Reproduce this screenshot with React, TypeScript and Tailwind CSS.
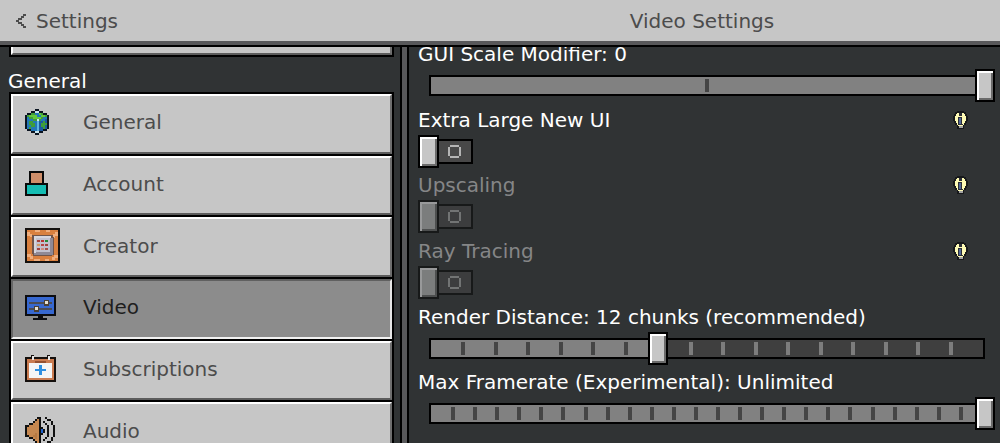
import { useState, type ReactNode } from "react";

type PixelArtProps = { rows: string[]; palette: Record<string, string>; className: string };

function PixelArt({ rows, palette, className }: PixelArtProps) {
  return (
    <svg
      aria-hidden="true"
      viewBox={`0 0 ${rows[0].length} ${rows.length}`}
      shapeRendering="crispEdges"
      className={className}
    >
      {rows.flatMap((row, y) =>
        [...row].map((c, x) =>
          palette[c] ? <rect key={`${x}-${y}`} x={x} y={y} width="1" height="1" fill={palette[c]} /> : null,
        ),
      )}
    </svg>
  );
}

const GLOBE = [
  ".....kk.....",
  "...kkwwkk...",
  ".kkggbbGgkk.",
  "kgGGGGbbGGgk",
  "kbggGGGGgbbk",
  "kbbbggwgbbBk",
  "kbggbbcBBgBk",
  "kbgggbcBgggk",
  "kbbggbcBggBk",
  "kbgbbbcBBgBk",
  ".kkbbbcBBkk.",
  "...kkwwkk...",
  ".....kk.....",
];

const SPEAKER = [
  "......kk..k.....",
  ".....kok...kk...",
  "....kook.k...k..",
  "..kkoook..k..k..",
  "kkoooook...k..k.",
  "kooooookk..k..k.",
  "kooooookbk.k..k.",
  "kooooookbk.k..k.",
  "kooooOokk..k..k.",
  "kkooOOok...k..k.",
  "..kkoOok..k..k..",
  "....kook.k...k..",
  ".....kok...kk...",
  "......kk..k.....",
];

function GlobeIcon() {
  return (
    <PixelArt
      className="h-[26px] w-6"
      rows={GLOBE}
      palette={{ k: "#0b1420", w: "#c9e6ef", g: "#3f9d3a", G: "#62c83c", b: "#2377b8", B: "#1c5a9f", c: "#5fb4e0" }}
    />
  );
}

function AccountIcon() {
  return (
    <svg aria-hidden="true" viewBox="0 0 23 25" className="h-[25px] w-[23px]">
      <path d="M4 0h15v13H4z" fill="#0a0a0a" />
      <path d="M6 2h11v10H6z" fill="#cf8e69" />
      <path d="M0 12h23v13H0z" fill="#0a0a0a" />
      <path d="M2 14h19v9H2z" fill="#15bdb3" />
    </svg>
  );
}

function CreatorIcon() {
  const dots = ["#a4423f", "#b73531", "#258a38", "#cf9c68", "#b84444", "#a4423f", "#a4423f", "#cf8d80", "#a7514a"];
  return (
    <svg aria-hidden="true" viewBox="0 0 35 35" shapeRendering="crispEdges" className="size-[35px]">
      <path d="M0 0h35v35H0z" fill="#151210" />
      <path d="M2 2h31v31H2z" fill="#d9803f" />
      <path
        d="M2 4h3v2h2v3H5V8H2zM30 4h3v4h-3v2h-2V6h2zM10 2h5v2h-5zM21 2h4v2h-4zM2 26h4v2h2v3H5v-2H2zM29 27h4v3h-3v2h-3v-3h2zM9 31h6v2H9zM20 31h4v2h-4z"
        fill="#efae7e"
      />
      <path d="M7 7h21v2h1v18h-2v1H8v-2H7z" fill="#71554a" />
      <path d="M9 8h17v18H9z" fill="#d5d5de" />
      <path d="M11 10h17v17H9v-2h2z" fill="#8f8995" />
      <path d="M11 10h14v14H11z" fill="#c2c1ce" />
      {dots.map((fill, i) => (
        <rect key={i} x={12 + (i % 3) * 4} y={12 + Math.floor(i / 3) * 4} width="3" height="2" fill={fill} />
      ))}
    </svg>
  );
}

function VideoIcon() {
  return (
    <svg aria-hidden="true" viewBox="0 0 31 25" shapeRendering="crispEdges" className="h-[25px] w-[31px]">
      <path d="M0 0h31v21H0zM13 21h5v2h4v2H8v-2h5z" fill="#0c0c10" />
      <path d="M2 2h27v17H2z" fill="#3768d0" />
      <path d="M4 7h23v2H4zM4 13h23v2H4z" fill="#4a4c55" />
      <path d="M19 5h5v6h-5zM9 11h5v6H9z" fill="#4a4036" />
      <path d="M20 6h3v3h-3zM10 12h3v3h-3z" fill="#e6e1d3" />
    </svg>
  );
}

function CalendarIcon() {
  return (
    <svg aria-hidden="true" viewBox="0 0 31 27" shapeRendering="crispEdges" className="h-[27px] w-[31px]">
      <path d="M0 2h31v25H0zM6 0h3v3H6zM22 0h3v3h-3z" fill="#15100d" />
      <path d="M2 4h27v21H2z" fill="#ca7b50" />
      <path d="M4 8h23v15H4z" fill="#f5f5f5" />
      <path d="M10 6h11v2H10z" fill="#95502f" />
      <path d="M7 1h2v4H7zM23 1h2v4h-2z" fill="#e8e8e8" />
      <path d="M14 10h3v4h4v2h-4v4h-3v-4h-4v-2h4z" fill="#2f8fe0" />
    </svg>
  );
}

function AudioIcon() {
  return (
    <PixelArt className="h-7 w-8" rows={SPEAKER} palette={{ k: "#111111", o: "#c68850", O: "#b67942", b: "#1f63cf" }} />
  );
}

const MENU: { label: string; icon: ReactNode }[] = [
  { label: "General", icon: <GlobeIcon /> },
  { label: "Account", icon: <AccountIcon /> },
  { label: "Creator", icon: <CreatorIcon /> },
  { label: "Video", icon: <VideoIcon /> },
  { label: "Subscriptions", icon: <CalendarIcon /> },
  { label: "Audio", icon: <AudioIcon /> },
];

function MenuButton({ label, icon, active, onSelect }: { label: string; icon: ReactNode; active: boolean; onSelect: () => void }) {
  const face = active
    ? "border-t-[#606060] border-l-[#666666] border-r-[#e6e6e6] border-b-[#f2f2f2] bg-[#8c8c8c] text-[#1e1e1e]"
    : "border-t-white border-l-white border-r-[#6e6e6e] border-b-[#5c5c5c] bg-[#c6c6c6] text-[#4c4c4c]";
  return (
    <button
      type="button"
      aria-current={active ? "page" : undefined}
      onClick={onSelect}
      className="border-x-2 border-t-2 border-black text-left"
    >
      <span className={`flex h-full items-center border-2 pb-[3px] pl-3 ${face}`}>
        <span className="w-[58px] shrink-0">{icon}</span>
        {label}
      </span>
    </button>
  );
}

function Hint({ about }: { about: string }) {
  return (
    <button type="button" aria-label={`About ${about}`} className="shrink-0">
      <svg aria-hidden="true" viewBox="0 0 15 18" shapeRendering="crispEdges" className="h-[18px] w-[15px]">
        <path d="M4 0h7v1h2v2h1v2h1v5h-1v2h-1v2h-2v4H4v-4H2v-2H1v-2H0V5h1V3h1V1h2z" fill="#17191b" />
        <path d="M4 2h7v1h1v2h1v5h-1v2h-1v2h-1v1H5v-1H4v-2H3v-2H2V5h1V3h1z" fill="#fdfab4" />
        <path d="M6 2h3v3H6zM5 6h4v7h1v1H5z" fill="#2b2e36" />
        <path d="M6 7h2v6H6z" fill="#50679a" />
        <path d="M6 15h4v2H6z" fill="#a3a3a3" />
      </svg>
    </button>
  );
}

type SliderProps = { id: string; label: string; text: (v: number) => string; min: number; max: number; initial: number };

function SliderRow({ id, label, text, min, max, initial }: SliderProps) {
  const [value, setValue] = useState(initial);
  const steps = max - min;
  return (
    <div>
      <label htmlFor={id} className="block whitespace-nowrap">
        {`${label}: ${text(value)}`}
      </label>
      <div className="mt-[7px] grid pl-px">
        <div className="col-start-1 row-start-1 mx-[10px] my-[6px] grid h-[21px] border-2 border-black bg-[#3f3f3f]">
          <div className="col-start-1 row-start-1 bg-[#818181]" style={{ width: `${((value - min) / steps) * 100}%` }} />
          <div className="col-start-1 row-start-1 flex items-center justify-evenly">
            {Array.from({ length: steps - 1 }, (_, i) => (
              <span key={i} className="flex w-0 justify-center">
                <span className={`h-[13px] w-1 shrink-0 ${i + 1 + min <= value ? "bg-[#454545]" : "bg-[#7d7d7d]"}`} />
              </span>
            ))}
          </div>
        </div>
        <input
          id={id}
          type="range"
          min={min}
          max={max}
          value={value}
          onChange={(e) => setValue(Number(e.target.value))}
          className="z-10 col-start-1 row-start-1 h-[33px] w-full appearance-none bg-transparent [&::-webkit-slider-thumb]:h-[33px] [&::-webkit-slider-thumb]:w-5 [&::-webkit-slider-thumb]:appearance-none [&::-webkit-slider-thumb]:border-2 [&::-webkit-slider-thumb]:border-black [&::-webkit-slider-thumb]:bg-[#c6c6c6] [&::-webkit-slider-thumb]:shadow-[inset_2px_2px_0_#ffffff,inset_-2px_-2px_0_#6b6b6b]"
        />
      </div>
    </div>
  );
}

function ToggleRow({ id, label, disabled = false }: { id: string; label: string; disabled?: boolean }) {
  const [on, setOn] = useState(false);
  return (
    <div>
      <div className="flex h-4 items-center justify-between pr-[27px]">
        <label htmlFor={id} className={disabled ? "text-[#858687]" : ""}>
          {label}
        </label>
        <Hint about={label} />
      </div>
      <label className={`mt-[7px] flex w-fit items-center ${on ? "flex-row-reverse" : ""} ${disabled ? "opacity-50" : ""}`}>
        <input id={id} type="checkbox" disabled={disabled} checked={on} onChange={() => setOn(!on)} className="sr-only" />
        <span className="h-[33px] w-[21px] border-2 border-black bg-[#c6c6c6] shadow-[inset_2px_2px_0_#ffffff,inset_-2px_-2px_0_#6b6b6b]" />
        <span className="flex h-[25px] w-[34px] items-center justify-center border-y-2 border-r-2 border-black bg-[#484848] pr-px">
          <svg aria-hidden="true" viewBox="0 0 13 13" shapeRendering="crispEdges" className="size-[13px]">
            <path d="M2 0h9v2H2zM0 2h2v9H0zM11 2h2v9h-2zM2 11h9v2H2z" fill="#b4b4b4" />
          </svg>
        </span>
      </label>
    </div>
  );
}

export default function App() {
  const [page, setPage] = useState("Video");
  return (
    <div className="flex h-screen flex-col overflow-hidden bg-[#303334] font-['DejaVu_Sans',sans-serif] text-xl leading-6 text-white">
      <header className="flex h-[47px] shrink-0 border-b-2 border-black bg-[#c6c6c6] text-[#4c4c4c]">
        <div className="flex w-full border-b-4 border-[#58585a]">
          <button type="button" className="flex w-2/5 items-center gap-[10px] pl-4">
            <svg aria-hidden="true" viewBox="0 0 10 14" shapeRendering="crispEdges" className="h-[14px] w-[10px]">
              <path d="M7 0h3v2H7zM5 2h3v2H5zM2 4h4v2H2zM0 6h3v2H0zM2 8h4v2H2zM5 10h3v2H5zM7 12h3v2H7z" fill="#4c4c4c" />
            </svg>
            Settings
          </button>
          <h1 className="flex flex-1 items-center justify-center pl-1">Video Settings</h1>
        </div>
      </header>
      <div className="flex min-h-0 flex-1">
        <nav aria-label="Settings" className="w-2/5 overflow-hidden pr-[6px] pl-2">
          <div className="ml-px h-[10px] border-2 border-t-0 border-black">
            <div className="h-full border-2 border-t-0 border-l-white border-r-[#6e6e6e] border-b-[#5c5c5c] bg-[#c6c6c6]" />
          </div>
          <h2 className="mt-3 h-[23px]">General</h2>
          <div className="ml-px grid h-[370px] grid-rows-6">
            {MENU.map((m) => (
              <MenuButton key={m.label} {...m} active={page === m.label} onSelect={() => setPage(m.label)} />
            ))}
          </div>
        </nav>
        <div className="w-[9px] shrink-0 border-x-2 border-black bg-[#58585a]" />
        <main className="min-w-0 flex-1 overflow-hidden pr-[5px] pl-[9px]">
          <div className="-mt-px grid h-[394px] grid-rows-6 leading-4">
            <SliderRow id="gui-scale" label="GUI Scale Modifier" text={String} min={-2} max={0} initial={0} />
            <ToggleRow id="large-ui" label="Extra Large New UI" />
            <ToggleRow id="upscaling" label="Upscaling" disabled />
            <ToggleRow id="ray-tracing" label="Ray Tracing" disabled />
            <SliderRow
              id="render-distance"
              label="Render Distance"
              text={(v) => `${v} chunks${v === 12 ? " (recommended)" : ""}`}
              min={5}
              max={22}
              initial={12}
            />
            <SliderRow
              id="max-framerate"
              label="Max Framerate (Experimental)"
              text={(v) => (v === 26 ? "Unlimited" : `${v * 10}`)}
              min={1}
              max={26}
              initial={26}
            />
          </div>
        </main>
      </div>
    </div>
  );
}
